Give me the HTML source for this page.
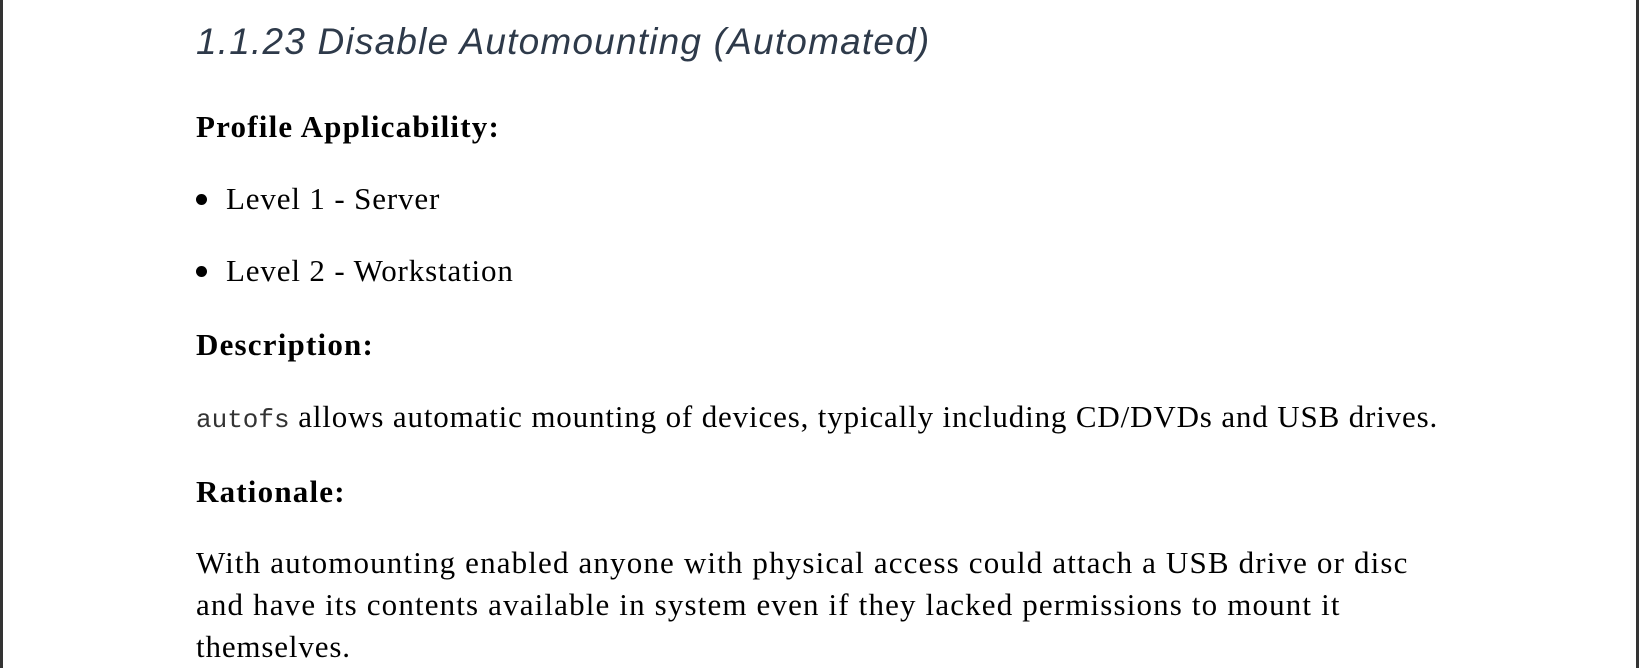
<!DOCTYPE html>
<html><head><style>
body{margin:0;width:1639px;height:668px;background:#fff;overflow:hidden;position:relative;font-family:"Liberation Serif",serif;color:#000}
.bl{position:absolute;left:0;top:0;width:3px;height:668px;background:#333}
.br{position:absolute;right:0;top:0;width:3px;height:668px;background:#333}
.t{position:absolute;left:196px;white-space:nowrap;line-height:1}
.h1{font-family:"Liberation Sans",sans-serif;font-style:italic;font-size:37px;letter-spacing:1.2px;color:#2e3a4a;top:23px}
.h{font-weight:bold;font-size:31px;letter-spacing:1.2px}
.p{font-size:31px;letter-spacing:0.85px}
.r{letter-spacing:1.15px}
code{font-family:"Liberation Mono",monospace;font-size:26px;letter-spacing:0;color:#333}
.b{position:absolute;left:196px;width:11px;height:11px;border-radius:50%;background:#000}
</style></head><body>
<div class="bl"></div><div class="br"></div>
<div class="t h1">1.1.23 Disable Automounting (Automated)</div>
<div class="t h" style="top:111px">Profile Applicability:</div>
<div class="b" style="top:194px"></div>
<div class="t p" style="top:183px;left:226px">Level 1 - Server</div>
<div class="b" style="top:266px"></div>
<div class="t p" style="top:255px;left:226px">Level 2 - Workstation</div>
<div class="t h" style="top:329px">Description:</div>
<div class="t p" style="top:401px"><code>autofs</code> allows automatic mounting of devices, typically including CD/DVDs and USB drives.</div>
<div class="t h" style="top:476px">Rationale:</div>
<div class="t p r" style="top:547px">With automounting enabled anyone with physical access could attach a USB drive or disc</div>
<div class="t p r" style="top:589px">and have its contents available in system even if they lacked permissions to mount it</div>
<div class="t p" style="top:631px">themselves.</div>
</body></html>
